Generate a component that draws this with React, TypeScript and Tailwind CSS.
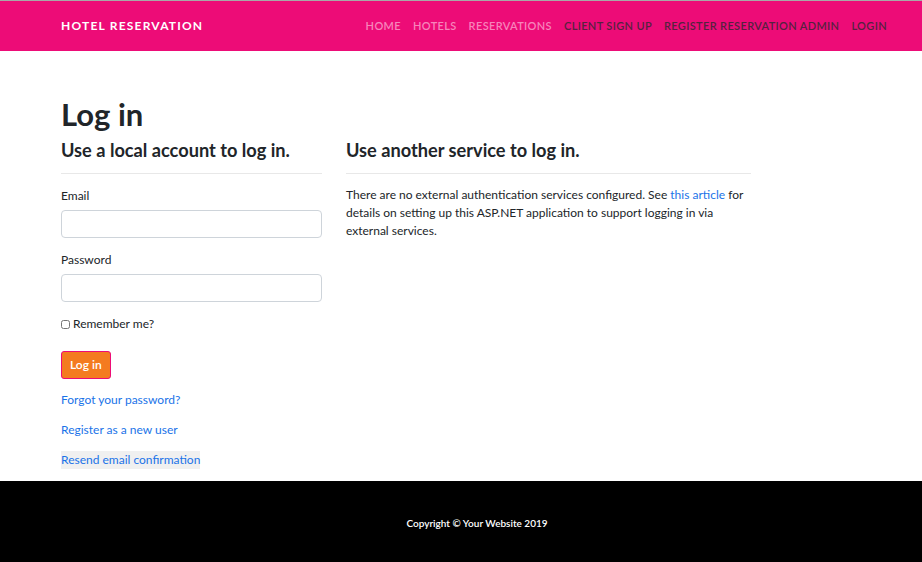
import React from "react";

const navLinks = [
  { label: "Home", active: true },
  { label: "Hotels", active: true },
  { label: "Reservations", active: true },
  { label: "Client Sign Up", active: false },
  { label: "Register Reservation Admin", active: false },
  { label: "Login", active: false },
];

export default function App() {
  return (
    <div className="min-h-[562px] flex flex-col bg-white font-['Lato','Open_Sans',sans-serif] text-[#212529]">
      {/* Navbar */}
      <header className="border-t border-[#a8a8a8] bg-[#ed0c77] h-[51px] flex items-center pl-[61px] pr-[35px]">
        <span className="text-white font-bold text-[12px] tracking-[1.2px] uppercase">Hotel Reservation</span>
        <nav className="ml-auto flex gap-[12px]">
          {navLinks.map((l) => (
            <a
              key={l.label}
              href="#"
              className={`uppercase text-[11px] font-semibold tracking-[0.35px] ${l.active ? "text-[#f784bb]" : "text-[#55223f]"}`}
            >
              {l.label}
            </a>
          ))}
        </nav>
      </header>

      {/* Body */}
      <main className="flex-1 px-[61px] pt-[45px] pb-[8px]">
        <h1 className="text-[31px] font-bold leading-[36px] text-[#212529]">Log in</h1>
        <div className="flex gap-[24px] mt-[6px]">
          <section className="w-[261px]">
            <h4 className="text-[18.2px] font-bold leading-[24px]">Use a local account to log in.</h4>
            <hr className="mt-[11px] border-[#e8e8e8]" />
            <div className="mt-[13px] text-[12px]">
              <label className="block leading-[18px]">Email</label>
              <input className="mt-[5px] w-full h-[28px] border border-[#ced4da] rounded-[4px]" />
              <label className="block leading-[18px] mt-[13px]">Password</label>
              <input type="password" className="mt-[5px] w-full h-[28px] border border-[#ced4da] rounded-[4px]" />
              <label className="flex items-center gap-[3px] mt-[13px] leading-[18px]">
                <input type="checkbox" className="w-[9px] h-[9px] m-0" />
                Remember me?
              </label>
              <button className="mt-[18px] bg-[#f47b20] border border-[#ed0c77] text-white rounded-[3px] h-[28px] px-[8px] text-[12px] font-semibold">
                Log in
              </button>
              <div className="mt-[12px] flex flex-col items-start gap-[12px] text-[#1a73e8]">
                <a href="#" className="leading-[18px]">Forgot your password?</a>
                <a href="#" className="leading-[18px]">Register as a new user</a>
                <a href="#" className="leading-[18px] bg-[#f0f0f0]">Resend email confirmation</a>
              </div>
            </div>
          </section>
          <section className="w-[405px]">
            <h4 className="text-[18.2px] font-bold leading-[24px]">Use another service to log in.</h4>
            <hr className="mt-[11px] border-[#e8e8e8]" />
            <p className="mt-[12px] text-[12px] leading-[18px]">
              There are no external authentication services configured. See{" "}
              <a href="#" className="text-[#1a73e8]">this article</a> for details on setting up this ASP.NET
              application to support logging in via external services.
            </p>
          </section>
        </div>
      </main>

      {/* Footer */}
      <footer className="bg-black h-[81px] flex items-center justify-center">
        <p className="ml-[32px] mt-[3px] text-white text-[10px] font-semibold">Copyright © Your Website 2019</p>
      </footer>
    </div>
  );
}
